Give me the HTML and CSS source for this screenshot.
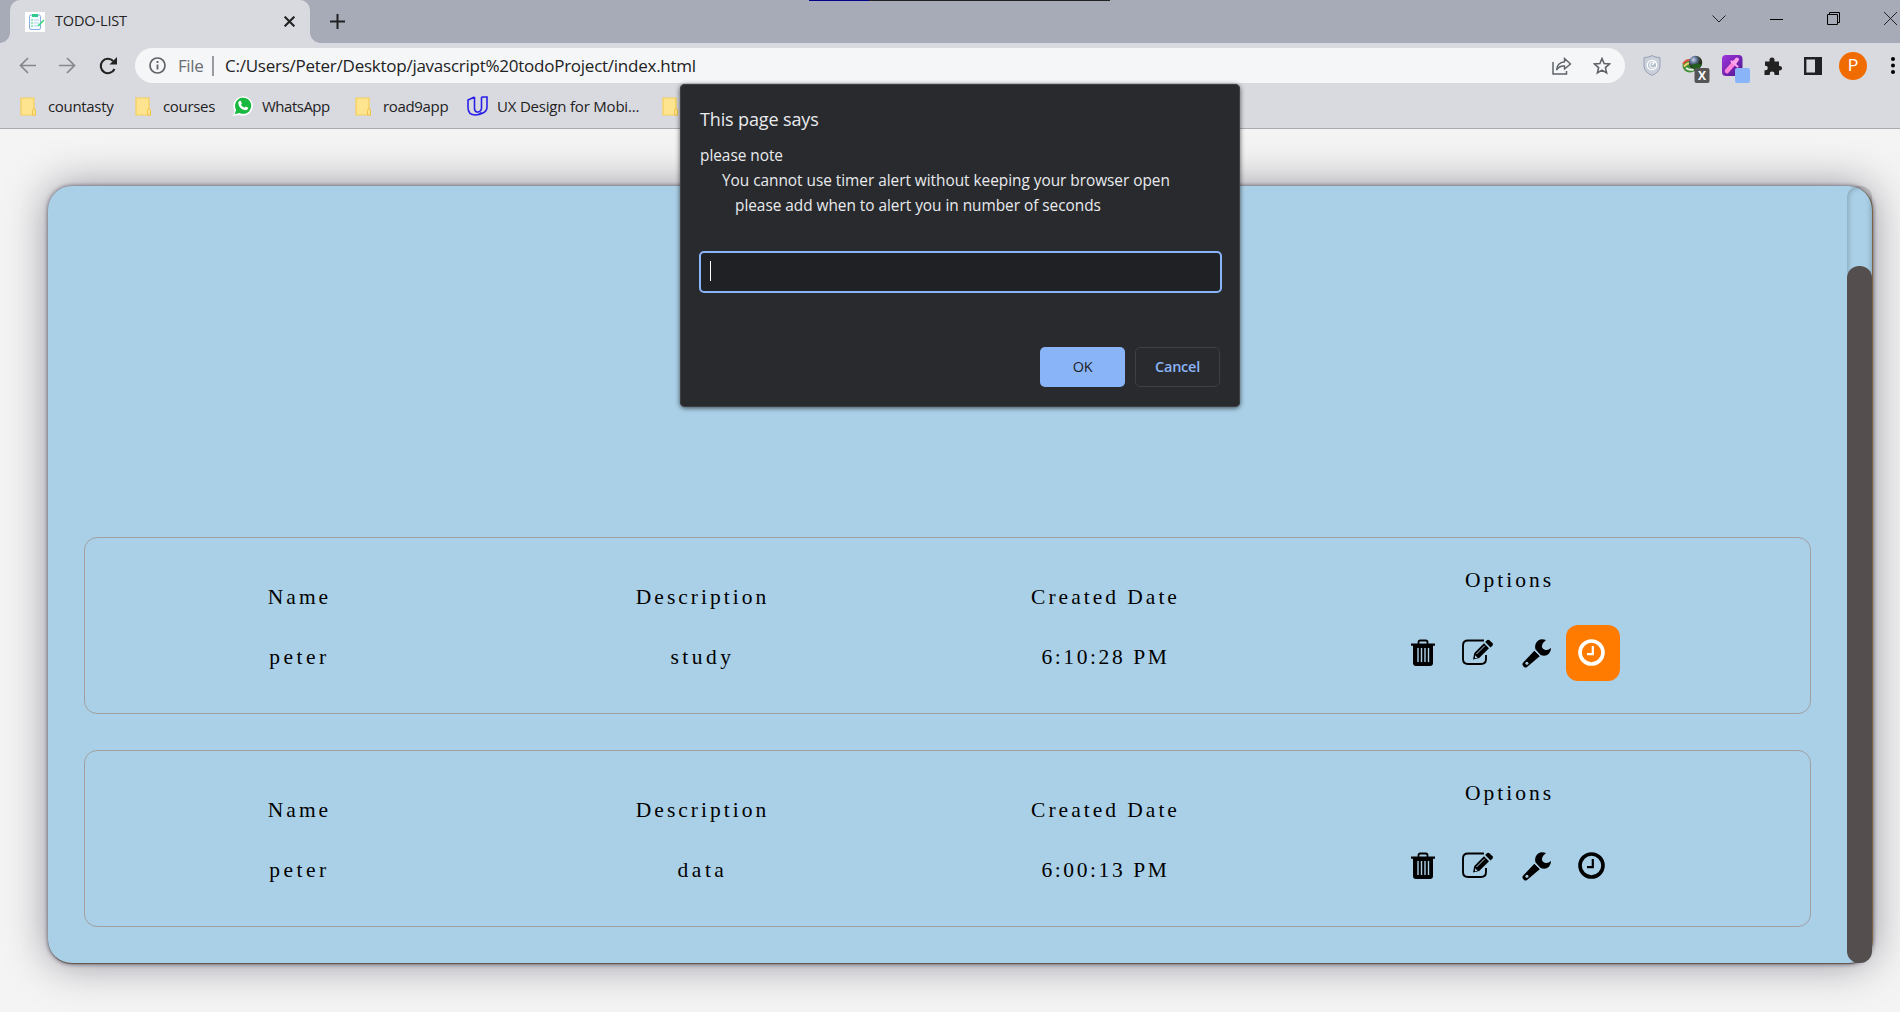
FILE: index.html
```html
<!DOCTYPE html>
<html lang="en">
<head>
<meta charset="utf-8">
<title>TODO-LIST</title>
<link rel="stylesheet" href="styles.css">
</head>
<body>
<svg width="0" height="0" class="defs">
  <symbol id="folder" viewBox="0 0 16 19"><path d="M1 1h13v12h1.500v5H1z" fill="#ffe48f" stroke="#f6cf58" stroke-width="1.200"/><path d="M12.500 18v-4.500q0-1.500 1.500-1.500t1.500 1.500V18z" fill="#ffe48f" stroke="#f0c24a"/></symbol>
  <symbol id="trash" viewBox="0 0 24 27"><path d="M7.500 5V3.200Q7.500 1.500 9.200 1.500h5.600q1.700 0 1.700 1.700V5" fill="none" stroke="#000" stroke-width="1.800"/><path d="M0 4.500h24v2.200H22V24q0 3-3 3H5q-3 0-3-3V6.700H0z"/><path d="M7 9v14M10.500 9v14M14 9v14M17.500 9v14" stroke="#aad0e7" stroke-width="1.400"/></symbol>
  <symbol id="edit" viewBox="0 0 32 26"><path d="M22 1.500H6q-5 0-5 5v13.500q0 5 5 5h13q5 0 5-5v-4" fill="none" stroke="#000" stroke-width="1.900"/><path d="M11 20.500l1.300-6.500L22 4.300l5 5-9.800 9.800z"/><path d="M23.200 3.100l2-2q1.200-.8 2.300.2l3 3q.9 1.100 0 2.200l-2 2z"/><path d="M14.500 15l8.200-8.200" stroke="#aad0e7"/><path d="M13 16.200l2.700 2.600-2.700.5z" fill="#aad0e7"/></symbol>
  <symbol id="wrench" viewBox="0 0 29 29"><path d="M12.500 11.500l5.500 5.500L5 28q-1.500 1-3 0l-1-1.200q-1.200-1.500 0-3z"/><path d="M24 1Q17-1.500 14 4q-1.600 3.300-.4 6.500l5 5.500q5 2 8.300-1.300 2.200-2.200 2.100-5.700-3 2.700-5.700 1.900Q19.500 10 20 6.500 20.700 3.500 24 1z"/><path d="M12 11l6.600 6.600" stroke="#aad0e7" stroke-width=".8"/><circle cx="4.900" cy="24.200" r="1.500" fill="#aad0e7"/></symbol>
  <symbol id="clock" viewBox="0 0 27 27"><circle cx="13.500" cy="13.500" r="11.500" fill="none" stroke="currentColor" stroke-width="3.600"/><path d="M14.800 7v8.200H9" fill="none" stroke="currentColor" stroke-width="2.200"/></symbol>
</svg>

<header class="browser">
  <div class="tabstrip">
    <div class="tab">
      <svg class="favicon" viewBox="0 0 20 20"><path fill="#fff" d="M0 0h20v20H0z"/><rect x="4.500" y="3" width="11" height="14.500" rx="1.500" fill="#f2fbff" stroke="#86aee0"/><path d="M7 2h6v3H7z" fill="#30c98a"/><path d="M6 8h2M6 11h2M6 14h2" stroke="#80dfa5" stroke-width="1.500"/><path d="M9 8h5M9 11h5M9 14h4" stroke="#b7d6e8"/><path d="M13 14l6-6" stroke="#27d96c" stroke-width="1.500"/></svg>
      <span class="tab-title">TODO-LIST</span>
      <svg class="tab-close" viewBox="0 0 10 10"><path d="M.6.600l8.800 8.800M9.400.600L.6 9.400" stroke="#222" stroke-width="1.900"/></svg>
    </div>
    <svg class="new-tab" viewBox="0 0 15 15"><path d="M7.500 0v15M0 7.500h15" stroke="#222" stroke-width="2"/></svg>
    <div class="behind"></div>
    <div class="window-buttons">
      <svg width="14" height="8" viewBox="0 0 14 8"><path d="M.5.500L7 7 13.500.5" fill="none" stroke="#222"/></svg>
      <svg width="13" height="14" viewBox="0 0 13 14"><path d="M0 7.500h13" stroke="#000"/></svg>
      <svg width="13" height="13" viewBox="0 0 13 13"><path d="M.5 2.500h10v10H.5zM2.500 2.500v-2h10v10h-2" fill="none" stroke="#000"/></svg>
      <svg width="13" height="13" viewBox="0 0 13 13"><path d="M0 0l13 13M13 0L0 13" stroke="#222"/></svg>
    </div>
  </div>
  <div class="toolbar">
    <div class="nav">
      <svg width="17" height="17" viewBox="0 0 17 17"><path d="M17 8.500H1.500M9 1L1.500 8.500 9 16" fill="none" stroke="#85878d" stroke-width="1.700"/></svg>
      <svg width="17" height="17" viewBox="0 0 17 17"><path d="M0 8.500h15.500M8 1l7.500 7.500L8 16" fill="none" stroke="#85878d" stroke-width="1.700"/></svg>
      <svg width="18" height="18" viewBox="0 0 18 18"><path d="M15.500 12A7.200 7.200 0 1 1 14.200 4" fill="none" stroke="#222" stroke-width="2.100"/><path d="M18 0v7.500h-7.500z" fill="#222"/></svg>
    </div>
    <div class="omnibox">
      <svg width="17" height="17" viewBox="0 0 17 17"><circle cx="8.500" cy="8.500" r="7.500" fill="none" stroke="#5f6368" stroke-width="1.700"/><path d="M8.500 7.500v5M8.500 4v2" stroke="#5f6368" stroke-width="1.800"/></svg>
      <span class="scheme">File</span>
      <span class="divider"></span>
      <span class="url">C:/Users/Peter/Desktop/javascript%20todoProject/index.html</span>
      <svg class="share" width="20" height="18" viewBox="0 0 20 18"><path d="M1 5v12h13.500v-3" fill="none" stroke="#5f6368" stroke-width="1.500"/><path d="M12.500 1.500L18.500 7l-6 5V9Q7.500 8.500 4.500 13q.7-7.500 8-8.300z" fill="none" stroke="#5f6368" stroke-width="1.400"/></svg>
      <svg class="star" width="18" height="18" viewBox="0 0 18 18"><path d="M9 1.500l2.100 5 5.400.500-4.100 3.600 1.200 5.300L9 13.100l-4.600 2.800 1.200-5.300L1.500 7l5.400-.5z" fill="none" stroke="#5f6368" stroke-width="1.600"/></svg>
    </div>
    <div class="extensions">
      <svg class="shield" width="18" height="21" viewBox="0 0 18 21"><path d="M9 .6q4 2 8 2V11q0 6-8 9.400Q1 17 1 11V2.600q4 0 8-2z" fill="#c9d0da" stroke="#98a2b3"/><circle cx="9" cy="10" r="4.700" fill="#b4bfcc" stroke="#fff" stroke-width="1.300"/><path d="M12 8a3 3 0 1 0 0 4M9 10l4-4" stroke="#fff" fill="none" stroke-width="1.100"/></svg>
      <svg class="globe" width="28" height="28" viewBox="0 0 28 28"><defs><radialGradient id="ball" cx=".35" cy=".3"><stop stop-color="#ccd8e8"/><stop offset=".5" stop-color="#63759b"/><stop offset="1" stop-color="#24311f"/></radialGradient></defs><ellipse cx="8" cy="11" rx="7.500" ry="6.500" fill="#438c38"/><path d="M1 9q4-6 10-3" fill="none" stroke="#df5340" stroke-width="2"/><path d="M2 11.500q4-5 9-3" fill="none" stroke="#f4d66a" stroke-width="2"/><path d="M4 13q4 3 8 1" fill="none" stroke="#e9eef0" stroke-width="2"/><circle cx="13.500" cy="7.500" r="6.700" fill="url(#ball)"/><path d="M9 10q6-3 11 0l-6 8z" fill="#245f20"/><rect x="12.500" y="13" width="15" height="15" rx="2" fill="#555"/><text x="20" y="25" text-anchor="middle" class="badge-text">X</text></svg>
      <svg class="picker" width="28" height="28" viewBox="0 0 28 28"><defs><linearGradient id="violet" x2="1" y2="1"><stop stop-color="#a135dd"/><stop offset="1" stop-color="#4c168c"/></linearGradient></defs><rect width="20.500" height="21" rx="4" fill="url(#violet)"/><path d="M5 16l7.500-8.500" stroke="#ff84dc" stroke-width="4.500" stroke-linecap="round"/><path d="M13 7l2-2.500" stroke="#ffa4e8" stroke-width="4" stroke-linecap="round"/><path d="M9.500 6.500l6 5" stroke="#ffa4e8" stroke-width="2.200" stroke-linecap="round"/><rect x="13" y="13" width="15" height="15" rx="2" fill="#8ab4f8"/></svg>
      <svg class="puzzle" width="18" height="18" viewBox="0 0 18 18"><path d="M1 4.500h4.500V3a2.500 2.500 0 0 1 5 0v1.500H15V9h.8a2.200 2.200 0 0 1 0 4.500H15V18h-4.500v-1a2.400 2.400 0 0 0-4.800 0v1H.5v-4.700h1a2.300 2.300 0 0 0 0-4.600H1z" fill="#222"/></svg>
      <svg class="panel" width="18" height="18" viewBox="0 0 18 18"><path d="M1.200 1.200h15.600v15.600H1.200z" fill="none" stroke="#202124" stroke-width="2.400"/><path d="M11 1h6v16h-6z" fill="#202124"/></svg>
      <span class="avatar">P</span>
      <svg class="menu" width="4" height="17" viewBox="0 0 4 17"><circle cx="2" cy="2" r="2"/><circle cx="2" cy="8.500" r="2"/><circle cx="2" cy="15" r="2"/></svg>
    </div>
  </div>
  <nav class="bookmarks">
    <svg class="folder"><use href="#folder"/></svg><span class="bm countasty">countasty</span>
    <svg class="folder"><use href="#folder"/></svg><span class="bm courses">courses</span>
    <svg class="whatsapp" viewBox="0 0 20 20"><path d="M0 20l1.500-5.500A9.700 9.700 0 1 1 6 18.800z" fill="#fff"/><path d="M1.800 18.200l1.300-4.400A8.100 8.100 0 1 1 6.500 17z" fill="#19b83f"/><path d="M6.200 5l1.500-.3 1.200 2.800-.9 1.200q1.100 2.200 3.500 3l1.200-1.200 2.600 1.300q-.3 2.500-2.800 2.400Q6 13 5.300 7.400 5.200 6 6.200 5z" fill="#fff"/></svg><span class="bm wa">WhatsApp</span>
    <svg class="folder"><use href="#folder"/></svg><span class="bm road">road9app</span>
    <svg class="udacity" viewBox="0 0 21 20"><path d="M7.500 1v11.500q0 3.200 3 3.700M7.500 1L1 4v7.500Q1 19 8.500 19q3 0 6-2.500M14.500 1H20v10q0 4-4 6-4 2-7.500 2M14.500 1v11q0 3.500-4 4.200" fill="none" stroke="#2a20e6" stroke-width="1.600"/></svg><span class="bm ux">UX Design for Mobi...</span>
    <svg class="folder"><use href="#folder"/></svg>
  </nav>
</header>

<main class="page">
  <section class="board">
    <div class="list">
      <article class="todo">
        <div class="field"><h2>Name</h2><p class="word">peter</p></div>
        <div class="field"><h2>Description</h2><p class="word">study</p></div>
        <div class="field"><h2>Created Date</h2><p>6:10:28 PM</p></div>
        <div class="field options"><h2>Options</h2>
          <div class="actions">
            <svg class="trash"><use href="#trash"/></svg>
            <svg class="edit"><use href="#edit"/></svg>
            <svg class="wrench"><use href="#wrench"/></svg>
            <span class="timer active"><svg class="clock"><use href="#clock"/></svg></span>
          </div>
        </div>
      </article>
      <article class="todo">
        <div class="field"><h2>Name</h2><p class="word">peter</p></div>
        <div class="field"><h2>Description</h2><p class="word">data</p></div>
        <div class="field"><h2>Created Date</h2><p>6:00:13 PM</p></div>
        <div class="field options"><h2>Options</h2>
          <div class="actions">
            <svg class="trash"><use href="#trash"/></svg>
            <svg class="edit"><use href="#edit"/></svg>
            <svg class="wrench"><use href="#wrench"/></svg>
            <span class="timer"><svg class="clock"><use href="#clock"/></svg></span>
          </div>
        </div>
      </article>
    </div>
    <div class="scrollbar"><div class="thumb"></div></div>
  </section>
</main>

<div class="dialog">
  <h1>This page says</h1>
  <p class="l1">please note</p>
  <p class="l2">You cannot use timer alert without keeping your browser open</p>
  <p class="l3">please add when to alert you in number of seconds</p>
  <div class="prompt"><span class="caret"></span></div>
  <div class="buttons"><span class="btn ok">OK</span><span class="btn cancel">Cancel</span></div>
</div>
</body>
</html>
```
FILE: styles.css
```css
* { box-sizing: border-box; margin: 0; padding: 0; }
body { width: 1900px; height: 1012px; overflow: hidden; background: #f4f4f4; font-family: "Open Sans", "Noto Sans", sans-serif; color: #222; display: flex; flex-direction: column; }
svg { display: block; flex: none; }
span, h1, h2, p { white-space: nowrap; }
.defs { position: absolute; }

/* Browser chrome */
.browser { height: 129px; flex: none; background: #d9dae0; border-bottom: 1px solid #a9abb1; }
.tabstrip { height: 43px; background: #a7abb8; display: flex; position: relative; padding-left: 10px; }
.tab { width: 300px; height: 43px; background: #d9dae0; border-radius: 10px 10px 0 0; display: flex; align-items: center; padding: 0 15px; position: relative; }
.tab::before, .tab::after { content: ""; position: absolute; bottom: 0; width: 10px; height: 10px; }
.tab::before { left: -10px; background: radial-gradient(circle at 0 0, #a7abb8 9.500px, #d9dae0 10px); }
.tab::after { right: -10px; background: radial-gradient(circle at 100% 0, #a7abb8 9.500px, #d9dae0 10px); }
.favicon { width: 20px; height: 20px; }
.tab-title { font-size: 14.5px; margin: -2px 0 0 10px; letter-spacing: -.15px; flex: 1; }
.tab-close { width: 11px; height: 11px; }
.new-tab { width: 15px; height: 15px; margin: 14px 0 0 20px; }
.behind { position: absolute; left: 809px; top: 0; width: 301px; height: 1px; background: linear-gradient(90deg, #00008b 60px, #222 60px); }
.window-buttons { margin-left: auto; display: flex; align-items: center; gap: 44px; height: 37px; padding-right: 3px; }
.toolbar { height: 43px; display: flex; align-items: center; padding-top: 2px; }
.nav { width: 135px; display: flex; align-items: center; gap: 23px; padding-left: 19px; }
.omnibox { width: 1490px; height: 35px; border-radius: 18px; background: #f5f6f8; display: flex; align-items: center; padding: 0 14px 0 14px; }
.scheme { color: #6b6d72; font-size: 17px; margin-left: 12px; width: 26px; letter-spacing: -.4px; }
.divider { width: 2px; height: 20px; background: #999ba0; margin: 0 11px 0 8px; }
.url { font-size: 17px; letter-spacing: -.25px; flex: 1; }
.share { margin-right: 21px; }
.extensions { flex: 1; display: flex; align-items: center; }
.shield { margin-left: 18px; }
.globe { margin: 7px 0 0 21px; }
.picker { margin: 7px 0 0 12px; }
.puzzle { margin-left: 14px; }
.panel { margin-left: 22px; }
.avatar { width: 28px; height: 28px; border-radius: 50%; background: #f06c00; color: #fff; display: flex; align-items: center; justify-content: center; font: 16px Roboto, sans-serif; margin-left: 17px; }
.menu { margin-left: 24px; }
.badge-text { font: bold 12px "Open Sans", sans-serif; fill: #fff; }
.bookmarks { height: 40px; display: flex; align-items: center; padding-left: 20px; }
.folder { width: 16px; height: 19px; }
.bm { font-size: 15px; letter-spacing: -.33px; margin: -1px 0 0 12px; }
.countasty { width: 87px; }
.courses { width: 70px; }
.whatsapp { width: 20px; height: 20px; }
.wa { width: 93px; margin-left: 9px; letter-spacing: -.5px; }
.road { width: 84px; }
.udacity { width: 21px; height: 20px; }
.ux { width: 165px; margin-left: 9px; letter-spacing: -.2px; }

/* Todo board */
.page { flex: 1; padding: 57px 27px 48px 48px; background: #f4f4f4; }
.board { height: 778px; border-radius: 24px; background: #aad0e7; border-right: 1px solid #7a6540; border-bottom: 1px solid #66584a; box-shadow: 0 0 4px rgba(40, 30, 55, .7), 0 0 40px rgba(50, 45, 65, .5); display: flex; }
.list { flex: 1; padding: 351px 36px 36px; display: flex; flex-direction: column; gap: 36px; }
.todo { height: 177px; border: 1px solid #a0a0a0; border-radius: 13px; display: grid; grid-template-columns: repeat(4, 403px); padding-left: 13px; }
.field { text-align: center; padding-top: 43px; }
.field h2, .field p { font: 400 21.5px/32px "Liberation Serif", serif; letter-spacing: 3px; color: #000; }
.field p { margin-top: 28px; letter-spacing: 2.6px; }
.field .word { letter-spacing: 3.5px; }
.options { padding-top: 26px; }
.options h2 { padding-left: 2px; }
.actions { display: flex; align-items: center; padding-left: 104px; height: 56px; margin-top: 29px; color: #000; }
.trash { width: 24px; height: 27px; margin-top: -1px; }
.edit { width: 32px; height: 26px; margin: -2px 0 0 27px; }
.wrench { width: 29px; height: 29px; margin-left: 28px; }
.timer { width: 54px; height: 56px; border-radius: 12px; margin-left: 15px; display: flex; align-items: center; padding: 0 0 1px 12px; }
.active { background: #ff7b00; color: #fff; }
.clock { width: 27px; height: 27px; }
.scrollbar { width: 25px; border-radius: 12px; padding-top: 80px; box-shadow: inset 0 0 6px rgba(0, 0, 0, .3); }
.thumb { height: 697px; border-radius: 12px; background: #544e4e; }

/* Browser prompt */
.dialog { position: absolute; left: 680px; top: 84px; width: 560px; height: 323px; background: #292a2d; border-radius: 5px; box-shadow: 0 1px 5px rgba(0, 0, 0, .65), inset 0 0 0 1px #3c3f43; padding: 20px; color: #e8eaed; }
.dialog h1 { font-size: 18px; font-weight: 400; line-height: 30px; letter-spacing: -.13px; }
.dialog p { font-size: 15.4px; line-height: 25px; letter-spacing: -.03px; }
.dialog .l1 { margin-top: 9px; }
.l2 { padding-left: 22px; }
.l3 { padding-left: 35px; }
.prompt { height: 42px; width: 523px; margin: 33px 0 0 -1px; border: 2px solid #8ab4f8; border-radius: 5px; background: #202124; padding: 8px 9px; }
.caret { display: block; width: 1px; height: 20px; background: #fff; }
.buttons { display: flex; justify-content: flex-end; gap: 10px; margin-top: 54px; }
.btn { width: 85px; height: 40px; border-radius: 5px; display: flex; align-items: center; justify-content: center; font-size: 14.5px; font-weight: 600; letter-spacing: -.25px; padding-bottom: 2px; }
.ok { background: #8ab4f8; color: #202124; font-weight: 500; }
.cancel { border: 1px solid #3c4043; color: #8ab4f8; }
```
